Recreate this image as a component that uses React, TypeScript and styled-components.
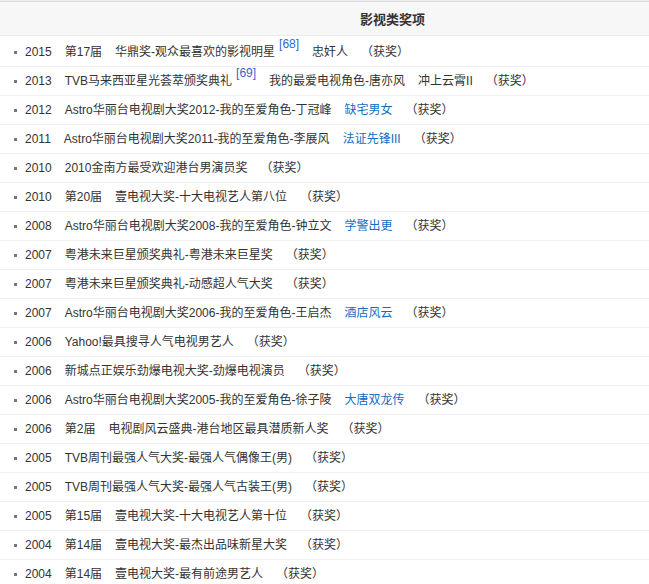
import React from "react";
import styled, { createGlobalStyle } from "styled-components";

const Global = createGlobalStyle`
  html, body { margin: 0; padding: 0; background: #fff; }
  body {
    font-family: "Liberation Sans", Arial, "Noto Sans CJK SC", sans-serif;
    font-size: 12px;
    color: #333;
  }
`;

const Table = styled.div`
  width: 649px;
  border-top: 1px solid #eeeeee;
`;

const Header = styled.div`
  height: 33px;
  border-top: 1px solid #dddddd;
  border-bottom: 1px solid #ececec;
  background: #f7f7f7;
  margin-bottom: 2px;
  padding-left: 136px;
  display: flex;
  align-items: center;
  justify-content: center;
  font-family: "Noto Sans CJK SC", "Liberation Sans", sans-serif;
  font-weight: bold;
  font-size: 13px;
  color: #333;
`;

const List = styled.ul`
  list-style: none;
  margin: 0;
  padding: 0;
`;

const Row = styled.li`
  height: 28px;
  border-bottom: 1px solid #efefef;
  display: flex;
  align-items: center;
  padding-left: 14px;
  white-space: nowrap;
  &::before {
    content: "";
    width: 3px;
    height: 3px;
    background: #777;
    margin-right: 8px;
    flex: none;
  }
`;

const Cells = styled.div`
  display: flex;
  align-items: center;
  gap: 13px;
`;

const Cell = styled.span<{ $link?: boolean }>`
  color: ${(p) => (p.$link ? "#136ec2" : "#333")};
  font-size: 12px;
  line-height: 16px;
`;

const Sup = styled.sup`
  color: #3366cc;
  font-size: 12px;
  line-height: 0;
  margin-left: 4px;
  position: relative;
  top: -3px;
`;

type Item = { t: string; link?: boolean; sup?: string };
type Award = { year: string; items: Item[] };

const awards: Award[] = [
  { year: "2015", items: [{ t: "第17届" }, { t: "华鼎奖-观众最喜欢的影视明星", sup: "[68]" }, { t: "忠奸人" }] },
  { year: "2013", items: [{ t: "TVB马来西亚星光荟萃颁奖典礼", sup: "[69]" }, { t: "我的最爱电视角色-唐亦风" }, { t: "冲上云霄II" }] },
  { year: "2012", items: [{ t: "Astro华丽台电视剧大奖2012-我的至爱角色-丁冠峰" }, { t: "缺宅男女", link: true }] },
  { year: "2011", items: [{ t: "Astro华丽台电视剧大奖2011-我的至爱角色-李展风" }, { t: "法证先锋III", link: true }] },
  { year: "2010", items: [{ t: "2010金南方最受欢迎港台男演员奖" }] },
  { year: "2010", items: [{ t: "第20届" }, { t: "壹电视大奖-十大电视艺人第八位" }] },
  { year: "2008", items: [{ t: "Astro华丽台电视剧大奖2008-我的至爱角色-钟立文" }, { t: "学警出更", link: true }] },
  { year: "2007", items: [{ t: "粤港未来巨星颁奖典礼-粤港未来巨星奖" }] },
  { year: "2007", items: [{ t: "粤港未来巨星颁奖典礼-动感超人气大奖" }] },
  { year: "2007", items: [{ t: "Astro华丽台电视剧大奖2006-我的至爱角色-王启杰" }, { t: "酒店风云", link: true }] },
  { year: "2006", items: [{ t: "Yahoo!最具搜寻人气电视男艺人" }] },
  { year: "2006", items: [{ t: "新城点正娱乐劲爆电视大奖-劲爆电视演员" }] },
  { year: "2006", items: [{ t: "Astro华丽台电视剧大奖2005-我的至爱角色-徐子陵" }, { t: "大唐双龙传", link: true }] },
  { year: "2006", items: [{ t: "第2届" }, { t: "电视剧风云盛典-港台地区最具潜质新人奖" }] },
  { year: "2005", items: [{ t: "TVB周刊最强人气大奖-最强人气偶像王(男)" }] },
  { year: "2005", items: [{ t: "TVB周刊最强人气大奖-最强人气古装王(男)" }] },
  { year: "2005", items: [{ t: "第15届" }, { t: "壹电视大奖-十大电视艺人第十位" }] },
  { year: "2004", items: [{ t: "第14届" }, { t: "壹电视大奖-最杰出品味新星大奖" }] },
  { year: "2004", items: [{ t: "第14届" }, { t: "壹电视大奖-最有前途男艺人" }] },
];

export default function App() {
  return (
    <>
      <Global />
      <Table>
        <Header>影视类奖项</Header>
        <List>
          {awards.map((a, i) => (
            <Row key={i}>
              <Cells>
                <Cell>{a.year}</Cell>
                {a.items.map((it, j) => (
                  <Cell key={j} $link={it.link}>
                    {it.t}
                    {it.sup && <Sup>{it.sup}</Sup>}
                  </Cell>
                ))}
                <Cell>（获奖）</Cell>
              </Cells>
            </Row>
          ))}
        </List>
      </Table>
    </>
  );
}
